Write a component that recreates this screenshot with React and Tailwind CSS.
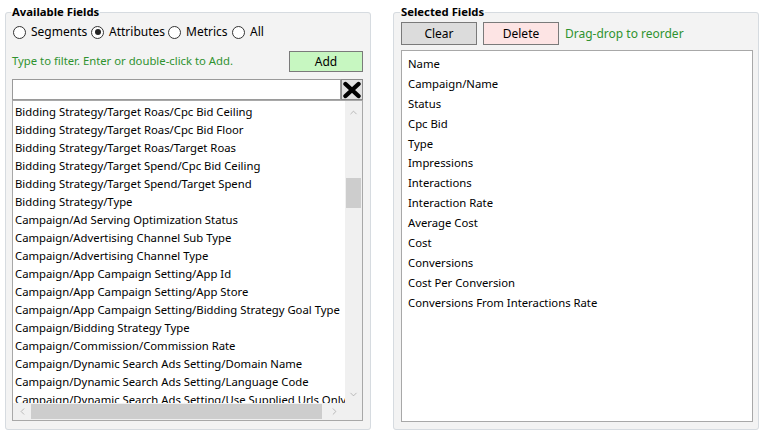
import { ChevronUp, ChevronDown, ChevronLeft, ChevronRight } from "lucide-react";

const FONT = { fontFamily: '"Noto Sans", "Open Sans", sans-serif' };

const available = [
  "Bidding Strategy/Target Roas/Cpc Bid Ceiling",
  "Bidding Strategy/Target Roas/Cpc Bid Floor",
  "Bidding Strategy/Target Roas/Target Roas",
  "Bidding Strategy/Target Spend/Cpc Bid Ceiling",
  "Bidding Strategy/Target Spend/Target Spend",
  "Bidding Strategy/Type",
  "Campaign/Ad Serving Optimization Status",
  "Campaign/Advertising Channel Sub Type",
  "Campaign/Advertising Channel Type",
  "Campaign/App Campaign Setting/App Id",
  "Campaign/App Campaign Setting/App Store",
  "Campaign/App Campaign Setting/Bidding Strategy Goal Type",
  "Campaign/Bidding Strategy Type",
  "Campaign/Commission/Commission Rate",
  "Campaign/Dynamic Search Ads Setting/Domain Name",
  "Campaign/Dynamic Search Ads Setting/Language Code",
  "Campaign/Dynamic Search Ads Setting/Use Supplied Urls Only",
];

const selected = [
  "Name",
  "Campaign/Name",
  "Status",
  "Cpc Bid",
  "Type",
  "Impressions",
  "Interactions",
  "Interaction Rate",
  "Average Cost",
  "Cost",
  "Conversions",
  "Cost Per Conversion",
  "Conversions From Interactions Rate",
];

function Radio({ label, checked, w }) {
  return (
    <label className={`flex items-center gap-[5px] ${w}`}>
      <span className="w-[13px] h-[13px] shrink-0 rounded-full border border-[#333] bg-white flex items-center justify-center">
        {checked && <span className="w-[6px] h-[6px] rounded-full bg-[#222]" />}
      </span>
      <span className="text-[12px]">{label}</span>
    </label>
  );
}

export default function App() {
  return (
    <div className="w-[766px] h-[440px] bg-white text-[11.3px] text-black flex gap-[22px] pl-[5px] pt-[4px]" style={FONT}>
      <fieldset className="w-[366px] h-[426px] border border-[#d6dbe0] rounded-[3px] bg-[#f3f3f3] pl-[6px] pr-[7px] flex flex-col">
        <legend className="-ml-[1px] px-[1px] font-bold leading-[16px]">Available Fields</legend>
        <div className="flex items-center h-[16px] mt-[4px] pl-[1px]">
          <Radio label="Segments" w="w-[78px]" />
          <Radio label="Attributes" checked w="w-[77px]" />
          <Radio label="Metrics" w="w-[64px]" />
          <Radio label="All" />
        </div>
        <div className="flex items-center justify-between mt-[11px] h-[21px]">
          <span className="text-[#2f922f]">Type to filter. Enter or double-click to Add.</span>
          <button className="w-[74px] h-[21px] bg-[#c7f7c1] border border-[#7a7a7a] text-[12px]">Add</button>
        </div>
        <div className="flex mt-[7px] h-[21px]">
          <div className="flex-1 bg-white border border-[#9a9a9a]" />
          <button className="w-[22px] h-[21px] bg-[#e1e1e1] border border-[#8a8a8a] flex items-center justify-center">
            <svg width="20" height="18" viewBox="0 0 20 18">
              <path d="M3.5 3 L16.5 15 M16.5 3 L3.5 15" stroke="#000" strokeWidth="4.4" strokeLinecap="round" />
            </svg>
          </button>
        </div>
        <div className="w-[351px] h-[321px] bg-white border border-[#a8a8a8] grid grid-cols-[1fr_17px] grid-rows-[1fr_17px]">
          <div className="overflow-hidden pl-[2px] pt-[2px]">
            {available.map((f) => (
              <div key={f} className="leading-[18px] h-[18px] whitespace-nowrap">{f}</div>
            ))}
          </div>
          <div className="bg-[#f0f0f0] flex flex-col items-center">
            <ChevronUp size={11} className="text-[#a0a0a0] mt-[6px]" strokeWidth={1.5} />
            <div className="w-[15px] h-[30px] bg-[#cdcdcd] mt-[60px]" />
            <div className="flex-1" />
            <ChevronDown size={11} className="text-[#a0a0a0] mb-[3px]" strokeWidth={1.5} />
          </div>
          <div className="bg-[#f0f0f0] flex items-center">
            <ChevronLeft size={11} className="text-[#a0a0a0] ml-[4px]" strokeWidth={1.5} />
            <div className="w-[291px] h-[15px] bg-[#cdcdcd] ml-[3px]" />
            <ChevronRight size={11} className="text-[#a0a0a0] ml-[7px]" strokeWidth={1.5} />
          </div>
          <div className="bg-[#f0f0f0]" />
        </div>
      </fieldset>

      <fieldset className="w-[366px] h-[426px] border border-[#d6dbe0] rounded-[3px] bg-[#f3f3f3] pl-[7px] pr-[5px] flex flex-col">
        <legend className="-ml-[1px] px-[1px] font-bold leading-[16px]">Selected Fields</legend>
        <div className="flex items-center gap-[6px] mt-[2px] h-[23px]">
          <button className="w-[76px] h-[23px] bg-[#dcdcdc] border border-[#7a7a7a] text-[12px]">Clear</button>
          <button className="w-[76px] h-[23px] bg-[#fde4e4] border border-[#7a7a7a] text-[12px]">Delete</button>
          <span className="text-[#2f922f] text-[12px]">Drag-drop to reorder</span>
        </div>
        <div className="mt-[5px] w-[352px] h-[372px] bg-white border border-[#a8a8a8] pl-[6px] pt-[3px]">
          {selected.map((f) => (
            <div key={f} className="leading-[20px] h-[19.9px] whitespace-nowrap">{f}</div>
          ))}
        </div>
      </fieldset>
    </div>
  );
}
